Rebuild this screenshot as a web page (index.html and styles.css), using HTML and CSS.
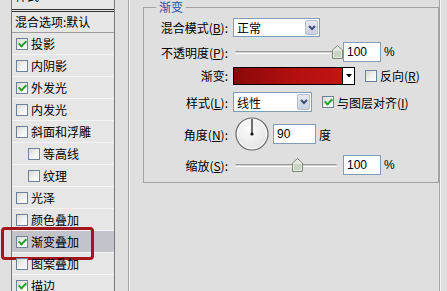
FILE: index.html
```html
<!DOCTYPE html>
<html lang="zh-CN">
<head>
  <meta charset="UTF-8" />
  <meta name="viewport" content="width=device-width, initial-scale=1.0"/>
  <title>图层样式 - 渐变叠加</title>
  <link rel="stylesheet" href="styles.css">
</head>
<body>

<div class="dialog">

  <!-- Style list -->
  <aside class="sidebar">
    <ul class="style__list">
      <li class="style__head">样式</li>
      <li class="style__blend">混合选项:默认</li>
      <li class="style__item"><span class="cb cb--on"></span>投影</li>
      <li class="style__item"><span class="cb"></span>内阴影</li>
      <li class="style__item"><span class="cb cb--on"></span>外发光</li>
      <li class="style__item"><span class="cb"></span>内发光</li>
      <li class="style__item"><span class="cb"></span>斜面和浮雕</li>
      <li class="style__item style__item--sub"><span class="cb"></span>等高线</li>
      <li class="style__item style__item--sub"><span class="cb"></span>纹理</li>
      <li class="style__item"><span class="cb"></span>光泽</li>
      <li class="style__item"><span class="cb"></span>颜色叠加</li>
      <li class="style__item style__item--active"><span class="cb cb--on"></span>渐变叠加</li>
      <li class="style__item"><span class="cb"></span>图案叠加</li>
      <li class="style__item"><span class="cb cb--on"></span>描边</li>
    </ul>
  </aside>

  <!-- Gradient overlay settings -->
  <section class="panel">
    <fieldset class="group">
      <legend>渐变</legend>

      <div class="row row--blend">
        <label class="row__label">混合模式(<u>B</u>):</label>
        <div class="select select--wide">
          <span class="select__value">正常</span>
          <span class="select__btn">
            <svg width="8" height="6" viewBox="0 0 8 6"><polyline points="1,1 4,4 7,1" fill="none" stroke="#3f4f6e" stroke-width="2"/></svg>
          </span>
        </div>
      </div>

      <div class="row row--opacity">
        <label class="row__label">不透明度(<u>P</u>):</label>
        <div class="slider">
          <div class="slider__track"></div>
          <span class="slider__thumb" style="left: 100%;">
            <svg width="11" height="14" viewBox="0 0 11 14"><path d="M0.5 5 L5.5 0.5 L10.5 5 V13.5 H0.5 Z" fill="#e4e8dc" stroke="#7d8a7a"/><path d="M2 6 H9 V12 H2 Z" fill="#c9d4c2"/></svg>
          </span>
        </div>
        <div class="field field--num">100</div>
        <span class="row__unit">%</span>
      </div>

      <div class="row row--gradient">
        <label class="row__label">渐变:</label>
        <div class="picker">
          <div class="picker__swatch"></div>
          <div class="picker__btn">
            <svg width="6" height="4" viewBox="0 0 6 4"><polygon points="0,0 6,0 3,3.5" fill="#000"/></svg>
          </div>
        </div>
        <span class="cb cb--row"></span>
        <span class="row__text">反向(<u>R</u>)</span>
      </div>

      <div class="row row--style">
        <label class="row__label">样式(<u>L</u>):</label>
        <div class="select select--narrow">
          <span class="select__value">线性</span>
          <span class="select__btn">
            <svg width="8" height="6" viewBox="0 0 8 6"><polyline points="1,1 4,4 7,1" fill="none" stroke="#3f4f6e" stroke-width="2"/></svg>
          </span>
        </div>
        <span class="cb cb--on cb--row"></span>
        <span class="row__text">与图层对齐(<u>I</u>)</span>
      </div>

      <div class="row row--angle">
        <label class="row__label">角度(<u>N</u>):</label>
        <svg class="dial" width="34" height="34" viewBox="0 0 34 34">
          <defs>
            <radialGradient id="dialFill" cx="0.4" cy="0.35" r="0.7">
              <stop offset="0" stop-color="#fbfbfb"/>
              <stop offset="1" stop-color="#e2e2e2"/>
            </radialGradient>
          </defs>
          <circle cx="17" cy="17" r="16" fill="url(#dialFill)" stroke="#6a6a6a" stroke-width="1.2"/>
          <circle cx="17" cy="17" r="14.6" fill="none" stroke="#ffffff" stroke-width="0.8"/>
          <line x1="17" y1="17" x2="17" y2="2" stroke="#111" stroke-width="1.2"/>
          <circle cx="17" cy="17" r="1.6" fill="#111"/>
        </svg>
        <div class="field field--angle">90</div>
        <span class="row__unit">度</span>
      </div>

      <div class="row row--scale">
        <label class="row__label">缩放(<u>S</u>):</label>
        <div class="slider">
          <div class="slider__track"></div>
          <span class="slider__thumb" style="left: 62%;">
            <svg width="11" height="14" viewBox="0 0 11 14"><path d="M0.5 5 L5.5 0.5 L10.5 5 V13.5 H0.5 Z" fill="#e4e8dc" stroke="#7d8a7a"/><path d="M2 6 H9 V12 H2 Z" fill="#c9d4c2"/></svg>
          </span>
        </div>
        <div class="field field--num">100</div>
        <span class="row__unit">%</span>
      </div>

    </fieldset>
  </section>

</div>

</body>
</html>
```

FILE: styles.css
```css
* {
  margin: 0;
  padding: 0;
  box-sizing: border-box;
}

body {
  background: #dfdfdf;
  font-family: "Noto Sans CJK SC", "Liberation Sans", sans-serif;
  font-size: 12px;
  color: #000;
  overflow: hidden;
}

.dialog {
  display: flex;
  height: 291px;
}

/* ---------- style list ---------- */

.sidebar {
  width: 115px;
  padding-left: 11px;
  background: #e0e0e0;
}

.style__list {
  list-style: none;
  background: #e6e6e6;
  border-left: 1px solid #7a7a7a;
  border-right: 1px solid #7a7a7a;
  height: 100%;
}

.style__head {
  height: 12px;
  display: flex;
  align-items: flex-end;
  line-height: 14px;
  padding: 0 0 6px 3px;
  overflow: hidden;
  border-bottom: 3px double #333;
}

.style__blend {
  height: 21px;
  line-height: 20px;
  padding-left: 3px;
  border-bottom: 1px solid #9c9c9c;
}

.style__item {
  height: 22px;
  display: flex;
  align-items: center;
  padding-left: 4px;
  border-bottom: 1px solid #f3f3f3;
  position: relative;
}

.style__item--sub {
  padding-left: 16px;
}

.style__item--active {
  background: #c3c3cc;
}

/* red mark round the selected row */
.style__item--active::before {
  content: "";
  position: absolute;
  left: -11px;
  top: -4px;
  width: 87px;
  height: 27px;
  border: 3px solid #a3161b;
  border-radius: 4px;
}

/* ---------- checkbox ---------- */

.cb {
  width: 12px;
  height: 12px;
  margin-right: 3px;
  border: 1px solid #6f819a;
  background: linear-gradient(135deg, #d9d9d4, #f4f4f2 60%, #ffffff);
  display: inline-flex;
  align-items: center;
  justify-content: center;
  flex-shrink: 0;
}

.cb--on::after {
  content: "";
  width: 3px;
  height: 6px;
  margin-top: -2px;
  border-right: 2px solid #21a121;
  border-bottom: 2px solid #21a121;
  transform: rotate(45deg);
}

.cb--row {
  margin-left: 10px;
}

/* ---------- settings panel ---------- */

.panel {
  margin-left: 13px;
  width: 313px;
  padding-left: 14px;
  border-left: 1px solid #a4a4a4;
  border-right: 1px solid #f4f4f4;
  box-shadow: inset 1px 0 0 #f6f6f6, inset -1px 0 0 #a4a4a4;
}

.group {
  width: 296px;
  border: 1px solid #a2a2a2;
  padding: 3px 0 6px 0;
  min-width: 0;
}

.group legend {
  margin-left: 12px;
  padding: 0 3px;
  line-height: 14px;
  color: #2353a6;
}

.row {
  display: flex;
  align-items: center;
  white-space: nowrap;
}

.row--blend { height: 21px; }
.row--opacity { height: 22px; margin-top: 3px; }
.row--gradient { height: 19px; margin-top: 3px; }
.row--style { height: 22px; margin-top: 6px; }
.row--angle { height: 34px; margin-top: 4px; }
.row--scale { height: 22px; margin-top: 3px; }

.row__label {
  width: 84px;
  margin-right: 5px;
  text-align: right;
}

.row__unit {
  margin-left: 3px;
  font-family: "Liberation Sans", "Noto Sans CJK SC", sans-serif;
}

.row--angle .row__unit {
  font-family: "Noto Sans CJK SC", sans-serif;
}

.row__text {
  margin-left: 0;
}

u {
  text-decoration: underline;
  text-underline-offset: 1px;
}

/* ---------- select ---------- */

.select {
  display: flex;
  align-items: center;
  justify-content: space-between;
  height: 20px;
  background: #fff;
  border: 1px solid #7f9db9;
  padding: 1px;
}

.select--wide {
  width: 87px;
  height: 19px;
}

.select--narrow {
  width: 79px;
}

.select__value {
  padding-left: 2px;
}

.select__btn {
  width: 13px;
  height: 100%;
  display: flex;
  align-items: center;
  justify-content: center;
  background: linear-gradient(#e6e9f1, #c9d0df);
  border: 1px solid #b4bdcf;
  border-radius: 2px;
}

/* ---------- slider ---------- */

.slider {
  position: relative;
  width: 106px;
  height: 100%;
  padding: 0 2px;
  display: flex;
  align-items: center;
}

.slider__track {
  width: 100%;
  height: 3px;
  border-radius: 2px;
  border-top: 1px solid #9a9a9a;
  border-bottom: 1px solid #ffffff;
  background: #d0d0d0;
}

.slider__thumb {
  position: absolute;
  top: 4px;
  margin-left: -7px;
  display: flex;
}

/* ---------- inputs ---------- */

.field {
  height: 20px;
  line-height: 18px;
  background: #fff;
  border: 1px solid #7f9db9;
  padding-left: 3px;
  font-family: "Liberation Sans", sans-serif;
}

.field--num {
  width: 38px;
  margin-left: 4px;
}

.field--angle {
  width: 43px;
  margin-left: 4px;
}

.dial {
  margin-left: 2px;
}

/* ---------- gradient picker ---------- */

.picker {
  display: flex;
  width: 122px;
  height: 18px;
  border: 1px solid #000;
}

.picker__swatch {
  flex: 1;
  background: linear-gradient(90deg, #8a0808, #b30f0f 55%, #c41515);
  border-right: 1px solid #000;
}

.picker__btn {
  width: 11px;
  background: #fff;
  display: flex;
  align-items: center;
  justify-content: center;
}
```
